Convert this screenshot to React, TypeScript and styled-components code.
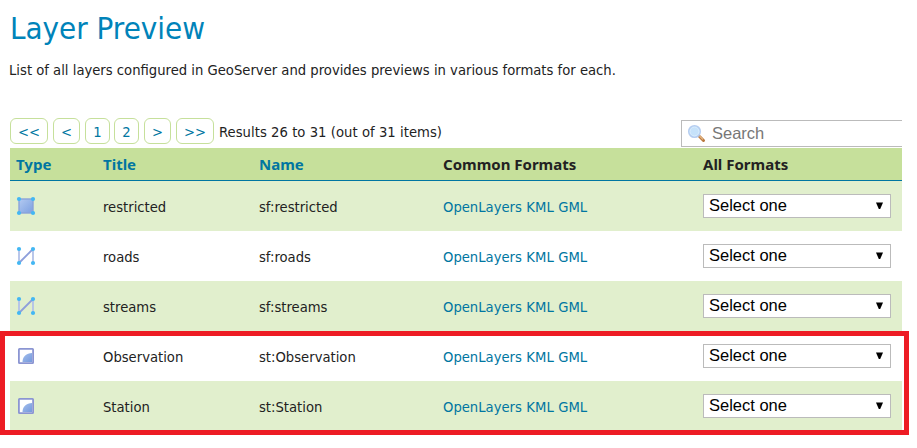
import React from "react";
import styled, { createGlobalStyle } from "styled-components";

const GlobalStyle = createGlobalStyle`
  *, *::before, *::after { box-sizing: border-box; }
  body {
    margin: 0;
    overflow: hidden;
    background: #fff;
    color: #222;
    font-family: Tahoma, "DejaVu Sans Condensed", "DejaVu Sans", sans-serif;
    font-size: 14.67px;
    line-height: 20px;
  }
`;

const Page = styled.main`
  position: relative;
  width: 917px;
  height: 448px;
  padding: 7px 15px 0 10px;
`;

const Heading = styled.h1`
  margin: 0;
  color: #0083b9;
  font-size: 31px;
  font-weight: 400;
  line-height: 42px;
`;

const Description = styled.p`
  margin: 11px 0 0;
  text-indent: -1px;
  white-space: nowrap;
`;

const Toolbar = styled.div`
  display: flex;
  justify-content: space-between;
  height: 30px;
  margin-top: 38px;
`;

const Pager = styled.nav`
  display: flex;
  height: 26px;
`;

const PageLink = styled.a<{ $width: number; $gap: number }>`
  width: ${(p) => p.$width}px;
  height: 26px;
  margin-right: ${(p) => p.$gap}px;
  border: 1px solid #c6e09b;
  border-radius: 6px;
  color: #0076a1;
  line-height: 26px;
  text-align: center;
  text-decoration: none;
`;

const Results = styled.span`
  letter-spacing: 0.04px;
  line-height: 28px;
  white-space: nowrap;
`;

const SearchBox = styled.label`
  display: flex;
  align-items: center;
  width: 221px;
  height: 27px;
  margin-top: 2px;
  padding-left: 5px;
  border: 1px solid #bbb;
  border-right: 0;
  background: #fff;
`;

const SearchInput = styled.input`
  width: 180px;
  height: 25px;
  margin-left: 5px;
  padding: 1px 0 2px;
  border: 0;
  outline: 0;
  background: transparent;
  font: 16.5px/22px "Liberation Sans", Arial, sans-serif;

  &::placeholder { color: #777; opacity: 1; }
`;

const Table = styled.div`
  width: 892px;
`;

const Row = styled.div<{ $even?: boolean }>`
  display: grid;
  grid-template-columns: 87px 156px 184px 260px 188px;
  align-items: center;
  height: 50px;
  padding-left: 6px;
  background: ${(p) => (p.$even ? "#e1efcd" : "#fff")};
`;

const HeaderRow = styled(Row)`
  height: 33px;
  border-bottom: 1px solid #0076a1;
  background: #c6e09b;
  font-family: Tahoma, "Noto Sans", sans-serif;
  font-size: 15px;
  font-weight: 700;
`;

const HeaderCell = styled.span<{ $sortable?: boolean }>`
  color: ${(p) => (p.$sortable ? "#0076a1" : "#222")};
`;

const Cell = styled.span`
  padding-top: 2px;
  white-space: nowrap;
`;

const FormatLinks = styled(Cell)`
  display: flex;
  gap: 4.5px;
`;

const FormatLink = styled.a`
  color: #0076a1;
  text-decoration: none;
`;

const Select = styled.button`
  display: flex;
  align-items: center;
  justify-content: space-between;
  width: 188px;
  height: 24px;
  padding: 0 7px 2px 5px;
  border: 1px solid #bbb;
  border-radius: 0;
  background: #fff;
  color: #000;
  font: 16.5px/20px "Liberation Sans", Arial, sans-serif;
`;

const Highlight = styled.div`
  position: absolute;
  top: 331px;
  left: 0;
  width: 909px;
  height: 104px;
  border: 5px solid #ed1c24;
  pointer-events: none;
`;

const Icon = styled.svg`
  display: block;
`;

const SearchIcon = () => (
  <Icon width="20" height="20" viewBox="0 0 20 20">
    <path d="M12.500 12.500l4 4" stroke="#b9783f" strokeWidth="3" strokeLinecap="round" />
    <path d="M12.500 12l3.500 3.500" stroke="#e5b783" strokeWidth="1.2" />
    <circle cx="7.500" cy="7.500" r="5.800" fill="#c6e2fa" stroke="#b5cdf0" strokeWidth="1.5" />
    <circle cx="7.500" cy="7.500" r="4.400" fill="none" stroke="#d8ecfd" strokeWidth="1" />
  </Icon>
);

const Dots = ({ points }: { points: number[][] }) => (
  <g fill="#43b7f3">
    {points.map(([x, y]) => (
      <circle key={`${x}-${y}`} cx={x} cy={y} r="2.1" />
    ))}
  </g>
);

const corners = [[3, 3], [17, 3], [3, 17], [17, 17]];

const PolygonIcon = () => (
  <Icon width="20" height="20" viewBox="0 0 20 20">
    <defs>
      <linearGradient id="polygonFill" x1="0" y1="0" x2="1" y2="1">
        <stop offset="0" stopColor="#b3caf1" />
        <stop offset="1" stopColor="#7c9fe0" />
      </linearGradient>
    </defs>
    <rect x="3" y="3" width="14" height="14" fill="url(#polygonFill)" stroke="#8ba3da" strokeWidth="1.4" />
    <Dots points={corners} />
  </Icon>
);

const LineIcon = () => (
  <Icon width="20" height="20" viewBox="0 0 20 20">
    <path d="M3 3v14M17 3v14" stroke="#b3c1e8" strokeWidth="1.8" />
    <path d="M3 17L17 3" stroke="#8e9fdb" strokeWidth="1.8" />
    <Dots points={corners} />
  </Icon>
);

const GeometryIcon = () => (
  <Icon width="20" height="20" viewBox="0 0 20 20">
    <defs>
      <linearGradient id="geometryFill" x1="0" y1="0" x2="1" y2="1">
        <stop offset="0" stopColor="#a4c0ed" />
        <stop offset="1" stopColor="#7599dc" />
      </linearGradient>
    </defs>
    <rect x="2.900" y="2.900" width="14.200" height="14.200" rx=".6" fill="#fff" stroke="#8b95d2" strokeWidth="1.8" />
    <path d="M6.500 16c0-5.300 4-9 9.500-9v9z" fill="url(#geometryFill)" />
  </Icon>
);

const Arrow = () => (
  <Icon width="7" height="7" viewBox="0 0 7 7">
    <path d="M0 .5h7L4.200 7H2.800z" fill="#000" />
  </Icon>
);

const pages = [
  { label: "<<", width: 38, gap: 5 },
  { label: "<", width: 27, gap: 5 },
  { label: "1", width: 25, gap: 4 },
  { label: "2", width: 25, gap: 5 },
  { label: ">", width: 27, gap: 5 },
  { label: ">>", width: 38, gap: 5 },
];

const layers = [
  { icon: PolygonIcon, title: "restricted", name: "sf:restricted" },
  { icon: LineIcon, title: "roads", name: "sf:roads" },
  { icon: LineIcon, title: "streams", name: "sf:streams" },
  { icon: GeometryIcon, title: "Observation", name: "st:Observation" },
  { icon: GeometryIcon, title: "Station", name: "st:Station" },
];

export default function App() {
  return (
    <>
      <GlobalStyle />
      <Page>
        <Heading>Layer Preview</Heading>
        <Description>
          List of all layers configured in GeoServer and provides previews in various formats for each.
        </Description>
        <Toolbar>
          <Pager>
            {pages.map((p) => (
              <PageLink key={p.label} $width={p.width} $gap={p.gap}>{p.label}</PageLink>
            ))}
            <Results>Results 26 to 31 (out of 31 items)</Results>
          </Pager>
          <SearchBox>
            <SearchIcon />
            <SearchInput placeholder="Search" />
          </SearchBox>
        </Toolbar>
        <Table>
          <HeaderRow>
            <HeaderCell $sortable>Type</HeaderCell>
            <HeaderCell $sortable>Title</HeaderCell>
            <HeaderCell $sortable>Name</HeaderCell>
            <HeaderCell>Common Formats</HeaderCell>
            <HeaderCell>All Formats</HeaderCell>
          </HeaderRow>
          {layers.map(({ icon: TypeIcon, title, name }, i) => (
            <Row key={name} $even={i % 2 === 0}>
              <TypeIcon />
              <Cell>{title}</Cell>
              <Cell>{name}</Cell>
              <FormatLinks>
                <FormatLink>OpenLayers</FormatLink>
                <FormatLink>KML</FormatLink>
                <FormatLink>GML</FormatLink>
              </FormatLinks>
              <Select type="button">
                Select one
                <Arrow />
              </Select>
            </Row>
          ))}
        </Table>
        <Highlight />
      </Page>
    </>
  );
}
